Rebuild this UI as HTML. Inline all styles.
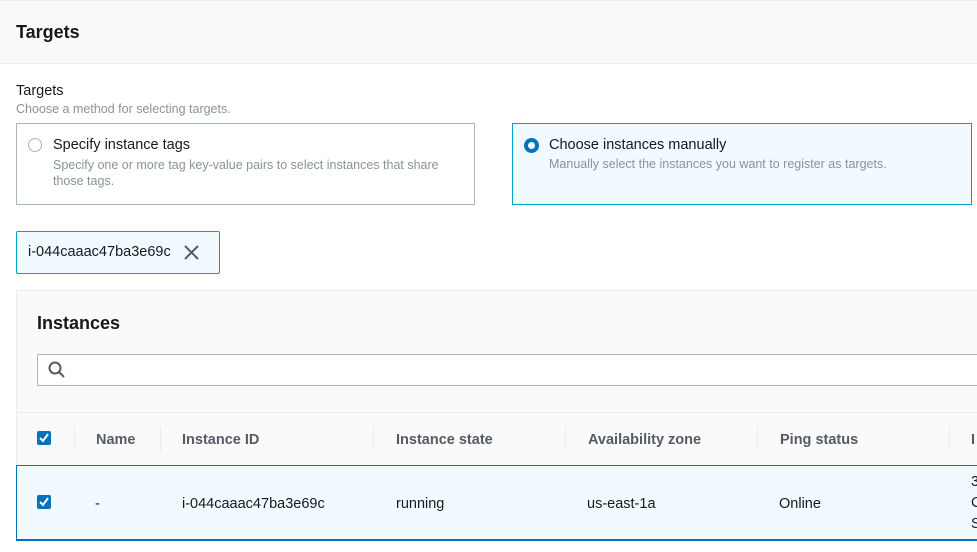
<!DOCTYPE html>
<html><head><style>
*{box-sizing:border-box;margin:0;padding:0}
body{width:977px;height:552px;overflow:hidden;background:#fff;font-family:"Liberation Sans",sans-serif;color:#16191f;position:relative}
.a{position:absolute}
.hdr{left:0;top:0;width:977px;height:64px;background:#fafafa;border-top:1px solid #eaeded;border-bottom:1px solid #eaeded}
.card{border:1px solid #aab7b8;background:#fff}
.sel{border:1px solid #00a1c9;background:#f1faff}
.t1{font-size:14.5px}
.t2{font-size:12.5px;color:#879596}
.th{font-size:14.5px;font-weight:bold;color:#545b64}
.td{font-size:14.5px;color:#16191f}
.sep{width:1px;height:24px;background:#eaeded}
.cb{width:14px;height:14px;background:#0073bb;border-radius:2px}
</style></head><body>
<div class="a hdr"></div>
<div class="a" style="left:16px;top:22px;font-size:18px;font-weight:bold">Targets</div>
<div class="a t1" style="left:16px;top:83px">Targets</div>
<div class="a t2" style="left:16px;top:102px">Choose a method for selecting targets.</div>
<div class="a card" style="left:16px;top:123px;width:459px;height:82px"></div>
<div class="a" style="left:28px;top:138px;width:14px;height:14px;border:1px solid #aab7b8;border-radius:50%"></div>
<div class="a t1" style="left:53px;top:137px">Specify instance tags</div>
<div class="a t2" style="left:53px;top:157px;width:410px;line-height:16px">Specify one or more tag key-value pairs to select instances that share those tags.</div>
<div class="a sel" style="left:512px;top:123px;width:460px;height:82px"></div>
<div class="a" style="left:524px;top:138px;width:15px;height:15px;border:4px solid #0073bb;border-radius:50%;background:#fff"></div>
<div class="a t1" style="left:549px;top:137px">Choose instances manually</div>
<div class="a t2" style="left:549px;top:157px">Manually select the instances you want to register as targets.</div>
<div class="a sel" style="left:16px;top:231px;width:204px;height:43px;border-radius:2px"></div>
<div class="a t1" style="left:28px;top:244px">i-044caaac47ba3e69c</div>
<svg class="a" style="left:184px;top:245px" width="15" height="15"><path d="M1 1L14 14M14 1L1 14" stroke="#545b64" stroke-width="2"/></svg>
<div class="a" style="left:16px;top:290px;width:961px;height:252px;background:#fafafa;border-left:1px solid #eaeded;border-top:1px solid #eaeded"></div>
<div class="a" style="left:37px;top:313px;font-size:18px;font-weight:bold">Instances</div>
<div class="a" style="left:37px;top:354px;width:945px;height:32px;background:#fff;border:1px solid #aab7b8;border-radius:2px"></div>
<svg class="a" style="left:48px;top:361px" width="18" height="18"><circle cx="7" cy="7" r="5.5" fill="none" stroke="#545b64" stroke-width="2"/><path d="M11 11L16 16" stroke="#545b64" stroke-width="2"/></svg>
<div class="a" style="left:16px;top:412px;width:961px;height:1px;background:#eaeded"></div>
<div class="a" style="left:16px;top:465px;width:961px;height:76px;background:#f1faff;border-top:1px solid #0073bb;border-bottom:2px solid #0073bb;border-left:1px solid #0073bb"></div>
<div class="a cb" style="left:37px;top:431px"></div>
<div class="a cb" style="left:37px;top:495px"></div>
<svg class="a" style="left:37px;top:431px" width="14" height="14"><path d="M3 7L6 10L11 3" stroke="#fff" stroke-width="2" fill="none"/></svg>
<svg class="a" style="left:37px;top:495px" width="14" height="14"><path d="M3 7L6 10L11 3" stroke="#fff" stroke-width="2" fill="none"/></svg>
<div class="a sep" style="left:74px;top:427px"></div>
<div class="a sep" style="left:160px;top:427px"></div>
<div class="a sep" style="left:373px;top:427px"></div>
<div class="a sep" style="left:565px;top:427px"></div>
<div class="a sep" style="left:757px;top:427px"></div>
<div class="a sep" style="left:949px;top:427px"></div>
<div class="a th" style="left:96px;top:432px">Name</div>
<div class="a th" style="left:182px;top:432px">Instance ID</div>
<div class="a th" style="left:396px;top:432px">Instance state</div>
<div class="a th" style="left:588px;top:432px">Availability zone</div>
<div class="a th" style="left:780px;top:432px">Ping status</div>
<div class="a th" style="left:971px;top:432px">I</div>
<div class="a td" style="left:95px;top:496px">-</div>
<div class="a td" style="left:182px;top:496px">i-044caaac47ba3e69c</div>
<div class="a td" style="left:396px;top:496px">running</div>
<div class="a td" style="left:587px;top:496px">us-east-1a</div>
<div class="a td" style="left:779px;top:496px">Online</div>
<div class="a td" style="left:971px;top:472px;line-height:21px">3<br>C<br>S</div>
</body></html>
